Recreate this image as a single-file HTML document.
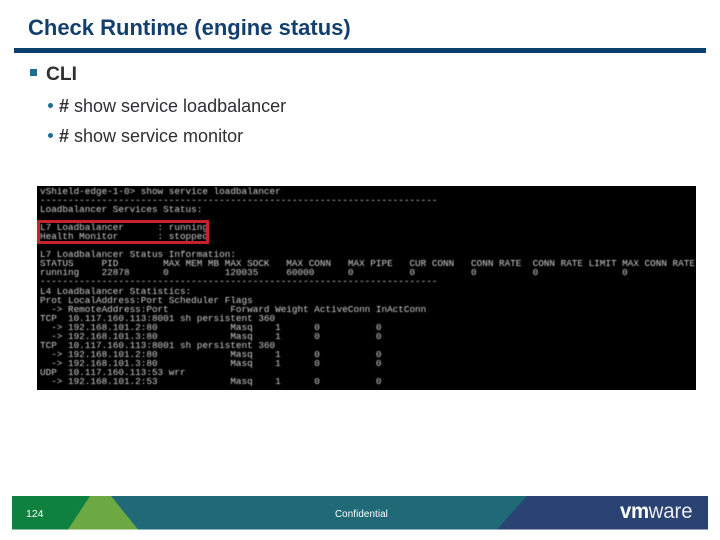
<!DOCTYPE html>
<html>
<head>
<meta charset="utf-8">
<style>
html,body{margin:0;padding:0;background:#fff}
body{width:720px;height:540px;position:relative;overflow:hidden;font-family:"Liberation Sans",sans-serif}
div{position:absolute}
.t{white-space:nowrap;color:#2f2f33}
#term{left:37px;top:186px;width:659px;height:204px;background:#000;overflow:hidden}
#term pre{position:absolute;left:3px;top:.5px;margin:0;font:9.33px/9.1px "Liberation Mono",monospace;color:#cfcfcf;filter:blur(.4px);letter-spacing:0}
</style>
</head>
<body>
<div class="t" style="left:28px;top:15px;font-size:22px;line-height:25px;font-weight:bold;color:#123f6d">Check Runtime (engine status)</div>
<div style="left:14px;top:48px;width:692px;height:5px;background:#0b3f6e"></div>

<div style="left:30px;top:69px;width:7px;height:7px;background:#1a6f94"></div>
<div class="t" style="left:46px;top:63px;font-size:19.2px;line-height:24px;font-weight:bold">CLI</div>

<div style="left:47.5px;top:102.5px;width:5px;height:5px;border-radius:50%;background:#1a6f94"></div>
<div class="t" style="left:59px;top:96px;font-size:18px;line-height:21px"><b>#</b> show service loadbalancer</div>
<div style="left:47.5px;top:132.5px;width:5px;height:5px;border-radius:50%;background:#1a6f94"></div>
<div class="t" style="left:59px;top:126px;font-size:18px;line-height:21px"><b>#</b> show service monitor</div>

<div id="term"><pre>vShield-edge-1-0&gt; show service loadbalancer
-----------------------------------------------------------------------
Loadbalancer Services Status:

L7 Loadbalancer      : running
Health Monitor       : stopped

L7 Loadbalancer Status Information:
STATUS     PID        MAX MEM MB MAX SOCK   MAX CONN   MAX PIPE   CUR CONN   CONN RATE  CONN RATE LIMIT MAX CONN RATE
running    22878      0          120035     60000      0          0          0          0               0
-----------------------------------------------------------------------
L4 Loadbalancer Statistics:
Prot LocalAddress:Port Scheduler Flags
  -&gt; RemoteAddress:Port           Forward Weight ActiveConn InActConn
TCP  10.117.160.113:8001 sh persistent 360
  -&gt; 192.168.101.2:80             Masq    1      0          0
  -&gt; 192.168.101.3:80             Masq    1      0          0
TCP  10.117.160.113:8001 sh persistent 360
  -&gt; 192.168.101.2:80             Masq    1      0          0
  -&gt; 192.168.101.3:80             Masq    1      0          0
UDP  10.117.160.113:53 wrr
  -&gt; 192.168.101.2:53             Masq    1      0          0</pre></div>
<div style="left:37px;top:220px;width:166px;height:18px;border:3.5px solid #c9202e"></div>

<svg style="position:absolute;left:0;top:0" width="720" height="540">
<rect x="12" y="496" width="696" height="33.5" fill="#2a4372"/>
<polygon points="12,496 527,496 497,529.5 12,529.5" fill="#206a78"/>
<polygon points="12,496 90,496 68,529.5 12,529.5" fill="#0f813f"/>
<polygon points="90,496 111,496 138,529.5 68,529.5" fill="#6ca943"/>
</svg>
<div class="t" style="left:26px;top:507px;font-size:10.5px;line-height:14px;color:#fff">124</div>
<div class="t" style="left:335px;top:507px;font-size:9.8px;line-height:15px;color:#fff;letter-spacing:.1px">Confidential</div>
<div class="t" style="left:620px;top:501px;font-size:21px;line-height:22px;color:#fff;letter-spacing:-.1px;transform:scaleX(.97);transform-origin:left"><b style="font-weight:bold;letter-spacing:-.4px">vm</b><span style="opacity:.9">ware</span></div>
</body>
</html>
